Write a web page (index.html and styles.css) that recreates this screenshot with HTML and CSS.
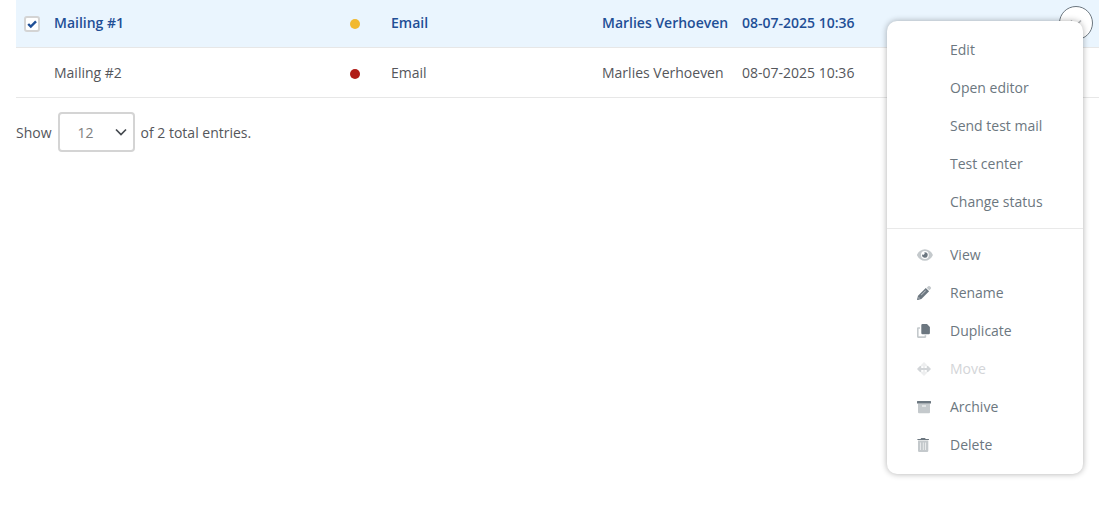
FILE: index.html
```html
<!DOCTYPE html>
<html lang="en">
<head>
<meta charset="utf-8">
<title>Mailings</title>
<link rel="stylesheet" href="styles.css">
</head>
<body>
<main class="page">
  <table class="mailings">
    <colgroup>
      <col class="col-check"><col class="col-name"><col class="col-status"><col class="col-type"><col class="col-owner"><col class="col-date"><col class="col-actions">
    </colgroup>
    <tbody>
      <tr class="row row-selected">
        <td>
          <span class="check">
            <input class="check-input" type="checkbox" checked aria-label="Select Mailing #1">
            <svg class="check-mark" viewBox="0 0 16 16" aria-hidden="true"><path d="M4.2 8 L6.8 10.6 L12 5.4"/></svg>
          </span>
        </td>
        <td>Mailing #1</td>
        <td><span class="dot dot-yellow"></span></td>
        <td>Email</td>
        <td>Marlies Verhoeven</td>
        <td>08-07-2025 10:36</td>
        <td class="actions">
          <button class="more" type="button" aria-label="Actions" aria-expanded="true">
            <svg class="more-icon" viewBox="0 0 12 8" aria-hidden="true"><path d="M1 1.5 L6 6.5 L11 1.5"/></svg>
          </button>
          <div class="menu">
            <button class="item" type="button"><span class="icon"></span>Edit</button>
            <button class="item" type="button"><span class="icon"></span>Open editor</button>
            <button class="item" type="button"><span class="icon"></span>Send test mail</button>
            <button class="item" type="button"><span class="icon"></span>Test center</button>
            <button class="item" type="button"><span class="icon"></span>Change status</button>
            <hr class="divider">
            <button class="item" type="button">
              <svg class="icon" viewBox="0 0 16 14" aria-hidden="true"><path class="light" fill-rule="evenodd" d="M7.9 1.2C4.5 1.2 1.7 3.3.1 6.5a1 1 0 0 0 0 1C1.7 10.7 4.5 12.8 7.9 12.8s6.2-2.1 7.8-5.3a1 1 0 0 0 0-1C14.1 3.3 11.3 1.2 7.9 1.2zM7.9 3.1a3.9 3.9 0 1 1 0 7.8a3.9 3.9 0 0 1 0-7.8z"/><path class="dark" d="M7.9 4.2a2.8 2.8 0 1 1-2.7 2.1a1.4 1.4 0 0 0 2-2a2.8 2.8 0 0 1 .7-.1z"/></svg>View</button>
            <button class="item" type="button">
              <svg class="icon" viewBox="0 0 16 14" aria-hidden="true"><path class="light" d="M9.7 1.7L11 .4a1.4 1.4 0 0 1 2 0l.6.6a1.4 1.4 0 0 1 0 2l-1.3 1.3z"/><path class="dark" fill-rule="evenodd" d="M8.8 1.9L12.1 5.2L4.4 12.9L.8 14a.6.6 0 0 1-.7-.7L1 9.7zM8.5 4.4L4 8.9l.4.4L8.9 4.8zM1.8 11.2L1.4 12.6L2.8 12.2z"/></svg>Rename</button>
            <button class="item" type="button">
              <svg class="icon" viewBox="0 0 16 14" aria-hidden="true"><path class="light" d="M3 3.2v1.6H1.6v7.5h6v-1h1.6v1.5A1.1 1.1 0 0 1 8.1 13.9h-7A1.1 1.1 0 0 1 0 12.8V4.3A1.1 1.1 0 0 1 1.1 3.2z"/><path class="dark" d="M5.5 0H10L12.9 2.9V9A1.2 1.2 0 0 1 11.7 10.2H5.5A1.2 1.2 0 0 1 4.3 9V1.2A1.2 1.2 0 0 1 5.5 0z"/></svg>Duplicate</button>
            <button class="item" type="button" disabled>
              <svg class="icon" viewBox="0 0 16 14" aria-hidden="true"><path class="light" d="M7 0L10.2 3.2L9.8 4.2H8V5.9H6V4.2H4.2L3.8 3.2zM6 8.1H8V9.8H9.8L10.2 10.8L7 14L3.8 10.8L4.2 9.800H6z"/><path class="dark" d="M0 7L3.2 3.8L4.2 4.2V6H9.8V4.2L10.8 3.8L14 7L10.8 10.2L9.8 9.8V8H4.2V9.8L3.2 10.2z"/></svg>Move</button>
            <button class="item" type="button">
              <svg class="icon" viewBox="0 0 16 14" aria-hidden="true"><path class="light" fill-rule="evenodd" d="M1 3.4H13V12.2a1 1 0 0 1-1 1H2a1 1 0 0 1-1-1zM5 5.5V6.6H9V5.5z"/><path class="dark" d="M.5 1H13.500a.5.5 0 0 1 .5.5V3.4H0V1.5A.5.5 0 0 1 .5 1z"/></svg>Archive</button>
            <button class="item" type="button">
              <svg class="icon" viewBox="0 0 16 14" aria-hidden="true"><path class="light" fill-rule="evenodd" d="M1 2.4H11.3V12.8A1.2 1.2 0 0 1 10.1 14H2.2A1.2 1.2 0 0 1 1 12.8zM3.3 4.6V12H3.9V4.6zM5.9 4.6V12H6.5V4.6zM8.4 4.6V12H9V4.6z"/><path class="dark" d="M.4.9H3.6L4.2 0H8L8.7.9H11.9V2.1H.4z"/></svg>Delete</button>
          </div>
        </td>
      </tr>
      <tr class="row">
        <td></td>
        <td>Mailing #2</td>
        <td><span class="dot dot-red"></span></td>
        <td>Email</td>
        <td>Marlies Verhoeven</td>
        <td>08-07-2025 10:36</td>
        <td></td>
      </tr>
    </tbody>
  </table>
  <div class="pager">
    <label class="pager-text" for="page-size">Show</label>
    <span class="select">
      <select class="select-input" id="page-size"><option>12</option><option>24</option><option>48</option></select>
      <svg class="select-arrow" viewBox="0 0 12 8" aria-hidden="true"><path d="M1 1.5 L6 6.5 L11 1.5"/></svg>
    </span>
    <span class="pager-text">of 2 total entries.</span>
  </div>
</main>
</body>
</html>
```

FILE: styles.css
```css
* {
  box-sizing: border-box;
}

body {
  margin: 0;
  background: #fff;
  color: #54565b;
  font: 14px/20px "Open Sans", "Noto Sans", sans-serif;
}

.page {
  min-height: 100vh;
  padding: 0 11px 0 16px;
}

.mailings {
  width: 100%;
  table-layout: fixed;
  border-collapse: separate;
  border-spacing: 0;
}

.col-check { width: 38px; }
.col-name { width: 295px; }
.col-status { width: 42px; }
.col-type { width: 211px; }
.col-owner { width: 140px; }
.col-date { width: 140px; }

.row td {
  height: 50px;
  padding: 0;
  border-bottom: 1px solid #e7e7e7;
  white-space: nowrap;
  vertical-align: middle;
}

.row-selected td {
  height: 48px;
  padding-bottom: 1px;
  background: #eaf5fe;
  color: #1f4f96;
  font-weight: 600;
}

.check {
  display: block;
  position: relative;
  width: 16px;
  height: 16px;
  margin-top: 2px;
  margin-left: 8px;
}

.check-input {
  appearance: none;
  display: block;
  width: 16px;
  height: 16px;
  margin: 0;
  border: 2px solid #d4d4d4;
  border-radius: 3px;
  background: #fff;
}

.check-mark {
  position: absolute;
  inset: 0;
  fill: none;
  stroke: none;
  stroke-width: 2.4;
  pointer-events: none;
}

.check-input:checked + .check-mark {
  stroke: #1f4f96;
}

.dot {
  display: block;
  width: 10px;
  height: 10px;
  margin-top: 2px;
  margin-left: 1px;
  border-radius: 50%;
}

.dot-yellow { background: #f2b92f; }
.dot-red { background: #b01c17; }

.row .actions {
  position: relative;
  padding-right: 6px;
}

.more {
  display: grid;
  place-items: center;
  width: 34px;
  height: 34px;
  margin-left: auto;
  padding: 0;
  border: 1px solid #6c7780;
  border-radius: 50%;
  background: #fff;
}

.more-icon {
  width: 12px;
  fill: none;
  stroke: #b4b7ba;
  stroke-width: 1.6;
}

.menu {
  position: absolute;
  z-index: 1;
  top: 21px;
  right: 16px;
  width: 196px;
  padding: 10px 0;
  border-radius: 10px;
  background: #fff;
  box-shadow: 0 0 6px rgba(0, 0, 0, 0.32);
}

.item {
  display: flex;
  align-items: center;
  gap: 17px;
  width: 100%;
  height: 38px;
  padding: 0 30px;
  border: 0;
  background: none;
  color: #6c7780;
  font: inherit;
  font-weight: 400;
  text-align: left;
}

.item:disabled {
  color: #d3d5d8;
}

.icon {
  flex: none;
  width: 16px;
  height: 14px;
  fill: #6c7780;
}

.light {
  opacity: 0.4;
}

.item:disabled .icon {
  opacity: 0.3;
}

.divider {
  height: 1px;
  margin: 7px 0;
  border: 0;
  background: #e9e9e9;
}

.pager {
  display: flex;
  align-items: center;
  gap: 6px;
  padding-top: 14px;
}

.pager-text {
  padding-top: 2px;
}

.select {
  position: relative;
}

.select-input {
  appearance: none;
  display: block;
  width: 77px;
  height: 40px;
  padding: 2px 30px 0 18px;
  border: 2px solid #d4d4d4;
  border-radius: 4px;
  background: #fff;
  color: #808080;
  font: inherit;
}

.select-arrow {
  position: absolute;
  top: 16px;
  right: 8px;
  width: 12px;
  height: 8px;
  fill: none;
  stroke: #45494f;
  stroke-width: 1.7;
  pointer-events: none;
}
```
